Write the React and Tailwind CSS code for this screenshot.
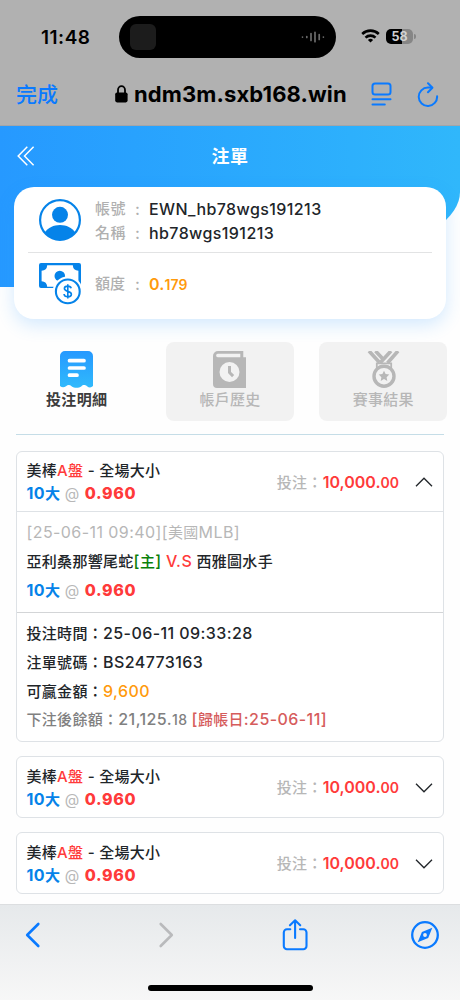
const bets = [
  { id: 1, open: true },
  { id: 2, open: false },
  { id: 3, open: false },
];

export default function App() {
  return (
    <div className="flex h-[1000px] w-[460px] flex-col overflow-hidden bg-[#fefefe] font-['Inter','Noto_Sans_CJK_TC',sans-serif] text-[15px] font-medium tracking-[0.3px] text-[#212529]">
      <BrowserTop />
      <main className="h-[778px] shrink-0 overflow-hidden">
        <header className="h-[161px] rounded-br-[315px_95px] bg-linear-to-r from-[#2699ff] to-[#30b7fb]">
          <div className="grid h-[60px] grid-cols-[60px_1fr_60px] items-center text-white">
            <svg className="ml-[17px]" width="19" height="20" viewBox="0 0 19 20" fill="none" stroke="currentColor" strokeWidth="1.5">
              <path d="M10.3 0.8 1.2 10l9.1 9.2M16.6 0.8 7.5 10l9.1 9.2" />
            </svg>
            <h1 className="pt-[2px] text-center text-[18px] leading-[24px] font-bold tracking-[0.5px]">注單</h1>
          </div>
        </header>
        <AccountCard />
        <Tabs />
        <div className="mx-[16px] mt-[13px] h-px bg-[#c5dde7]" />
        <div className="mx-[16px] mt-[16px] space-y-[14px]">
          {bets.map((bet) => (
            <BetCard key={bet.id} open={bet.open} />
          ))}
        </div>
      </main>
      <BrowserBottom />
    </div>
  );
}

function BrowserTop() {
  return (
    <div className="h-[126px] shrink-0 border-b border-[#a3a5a8] bg-[#b1b1b1] text-black">
      <div className="flex h-[58px] items-end">
        <span className="ml-[41px] w-[78px] pb-[8px] text-[19px] leading-[24px] font-semibold tracking-[0.5px]">11:48</span>
        <div className="flex h-[42px] w-[217px] items-center justify-between rounded-full bg-black pr-[11px] pl-[11px]">
          <div className="size-[26px] rounded-[6px] bg-[#1c1c1c]" />
          <svg width="24" height="12" viewBox="0 0 24 12" stroke="#6b6b6b" strokeWidth="1.7" strokeLinecap="round">
            <path d="M1.5 6v.1M5.8 5.6v.8M10 2.5v7M14 1.3v9.4M18.2 3.6v4.8M22.4 6v.1" />
          </svg>
        </div>
        <svg className="mb-[15px] ml-[25px]" width="19" height="14" viewBox="0 0 19 14" fill="none" stroke="#000" strokeWidth="2.6">
          <path d="M1.2 5a12 12 0 0 1 16.6 0" />
          <path d="M4.5 8.6a7.2 7.2 0 0 1 10 0" />
          <path d="M9.5 13.6 6.9 11a3.8 3.8 0 0 1 5.2 0Z" fill="#000" stroke="none" />
        </svg>
        <div className="mb-[14px] ml-[6px] flex items-center gap-px">
          <div className="flex h-[15px] w-[27px] items-center justify-center rounded-[5px] bg-linear-to-r from-black from-58% to-[#868686] to-58% pt-px text-[12.5px] leading-none font-bold tracking-[0px] text-[#d2d2d2]">
            58
          </div>
          <div className="h-[5px] w-[1.5px] rounded-r-full bg-[#868686]" />
        </div>
      </div>
      <div className="flex h-[67px] items-center pt-[5px]">
        <span className="ml-[16px] w-[99px] pt-[2px] text-[21px] tracking-[0px] text-[#0a7aff]">完成</span>
        <svg width="13" height="18" viewBox="0 0 13 18">
          <path d="M3 8V5a3.5 3.9 0 0 1 7 0v3" fill="none" stroke="#000" strokeWidth="1.8" />
          <rect x="0.2" y="7.4" width="12.4" height="10" rx="1.8" />
        </svg>
        <span className="ml-[6px] w-[237px] text-[22px] leading-[28px] font-bold tracking-[0.12px] whitespace-nowrap">ndm3m.sxb168.win</span>
        <svg width="21" height="24" viewBox="0 0 21 24" fill="none" stroke="#0a7aff" strokeWidth="2" strokeLinecap="round">
          <rect x="1.5" y="1.5" width="18" height="11" rx="2.5" />
          <path d="M1.5 17.3h18M1.5 22.6h12.3" />
        </svg>
        <svg className="ml-[25px]" width="22" height="25" viewBox="0 0 22 25" fill="none" stroke="#0a7aff" strokeWidth="2" strokeLinecap="round" strokeLinejoin="round">
          <path d="M20.1 14.2A9.2 9.2 0 1 1 10.9 5.6h4" />
          <path d="M11 1.3l4.4 4.4L11 10.2" />
        </svg>
      </div>
    </div>
  );
}

function AccountCard() {
  return (
    <section className="relative mx-[14px] -mt-[100px] h-[132px] rounded-[20px] bg-white px-[14px] shadow-[0_6px_18px_rgba(40,150,255,0.2)]">
      <div className="flex h-[66px] items-center border-b border-[#e2e3e4] pt-px pl-[11px]">
        <svg width="42" height="42" viewBox="0 0 42 42" fill="#0583e9">
          <circle cx="21" cy="21" r="19.9" fill="none" stroke="#0583e9" strokeWidth="2.2" />
          <circle cx="21" cy="15.8" r="8" />
          <path d="M5.7 33.4C9.2 28.7 14.5 26 21 26s11.8 2.7 15.3 7.4A20 20 0 0 1 5.7 33.4Z" />
        </svg>
        <div className="ml-[14px] pt-[2px] text-[16px] leading-[24px] tracking-[0.4px]">
          <InfoRow label="帳號">EWN_hb78wgs191213</InfoRow>
          <InfoRow label="名稱">hb78wgs191213</InfoRow>
        </div>
      </div>
      <div className="flex h-[62px] items-center pl-[11px]">
        <svg width="42" height="42" viewBox="0 0 42 42" fill="#0583e9">
          <path fillRule="evenodd" d="M2 0h38a2 2 0 0 1 2 2v23H2a2 2 0 0 1-2-2V2a2 2 0 0 1 2-2Zm6.2 2.2A6 6 0 0 1 2.6 7.8v10.4a6 6 0 0 1 5.6 5.6h25.6a6 6 0 0 1 5.6-5.6V7.8a6 6 0 0 1-5.6-5.6Z" />
          <circle cx="20.8" cy="13" r="5.3" />
          <circle cx="28.8" cy="28.4" r="15" fill="#fff" />
          <circle cx="28.8" cy="28.4" r="11.9" fill="#fff" stroke="#0583e9" strokeWidth="2.1" />
          <path d="M32.2 25.3c-.4-1.6-1.7-2.2-3.4-2.2-2 0-3.4.9-3.4 2.5 0 3.7 7 1.8 7 5.6 0 1.7-1.6 2.6-3.6 2.6s-3.6-.9-3.8-2.8M28.8 21.3v14.3" fill="none" stroke="#0583e9" strokeWidth="1.6" />
        </svg>
        <div className="ml-[14px] text-[16px] leading-[24px] tracking-[0.1px]">
          <InfoRow label="額度">
            <span className="font-semibold text-[#ff9a0c]">
              0.<span className="text-[14px]">179</span>
            </span>
          </InfoRow>
        </div>
      </div>
    </section>
  );
}

function InfoRow({ label, children }) {
  return (
    <div className="flex">
      <span className="w-[32px] text-[15px] text-[#b0b0b0]">{label}</span>
      <span className="w-[22px] pl-[8px] text-[#b0b0b0]">:</span>
      <span>{children}</span>
    </div>
  );
}

function Tabs() {
  return (
    <nav className="mx-[12.5px] mt-[23px] grid grid-cols-3 gap-[25px] text-[15px] leading-[22px] text-[#b7b7b7]">
      <div className="flex h-[79px] flex-col items-center pt-[9px] font-bold text-[#3c3c3c]">
        <svg width="33" height="37" viewBox="0 0 33 37">
          <defs>
            <linearGradient id="receipt" x1="0" y1="0" x2="0" y2="1">
              <stop offset="0" stopColor="#2699ff" />
              <stop offset="1" stopColor="#30bafc" />
            </linearGradient>
          </defs>
          <path d="M5 0h23a5 5 0 0 1 5 5v30c-2 2-4 1.7-6 .2-2.6-2-4.5-1-5.5 0-3 2.2-7 2.2-10 0-1.5-1.4-3.5-1.8-5.5 0-2 1.5-4 1.5-6-.2V5a5 5 0 0 1 5-5Z" fill="url(#receipt)" />
          <path d="M9.5 9.7H24M9.5 17H24M9.5 24.2H17" stroke="#fff" strokeWidth="3.7" strokeLinecap="round" />
        </svg>
        <span className="pt-px">投注明細</span>
      </div>
      <div className="flex h-[79px] flex-col items-center rounded-[8px] bg-[#f2f2f2] pt-[9px]">
        <svg width="33" height="37" viewBox="0 0 33 37" fill="#b7b7b7">
          <path d="M5 0h25.3v6.2H33V37H4a4 4 0 0 1-4-4V5a5 5 0 0 1 5-5Z" />
          <path d="M4.8 2.8h22.5v3.4H4.8a1.7 1.7 0 0 1 0-3.4Z" fill="#f2f2f2" />
          <circle cx="16.5" cy="21" r="10" fill="#f2f2f2" />
          <path d="M16.5 15v6.5l3.6 3.6" fill="none" stroke="#b7b7b7" strokeWidth="3" />
        </svg>
        <span className="pt-px">帳戶歷史</span>
      </div>
      <div className="flex h-[79px] flex-col items-center rounded-[8px] bg-[#f2f2f2] pt-[9px]">
        <svg width="33" height="37" viewBox="0 0 33 37" fill="none" stroke="#b7b7b7">
          <path d="M2 0 12.5 11.5M8.5 0l7 7.5M24 0 13 12M31 0 20.5 12" strokeWidth="3.6" />
          <path d="M9.8 17v-4.6h14.4V17" strokeWidth="1.8" />
          <circle cx="17" cy="25.2" r="10" strokeWidth="3.4" />
          <path d="m17 19.8 1.6 3.3 3.7.5-2.7 2.6.7 3.7-3.3-1.8-3.3 1.8.7-3.7-2.7-2.6 3.7-.5Z" fill="#b7b7b7" stroke="none" />
        </svg>
        <span className="pt-px">賽事結果</span>
      </div>
    </nav>
  );
}

// latin letters and digits run one size above the chinese text
function Num({ children }) {
  return <span className="text-[16px] leading-none tracking-[0.42px]">{children}</span>;
}

function Pick() {
  return (
    <div>
      <span className="font-bold text-[#0583e9]">
        <Num>10</Num>大
      </span>
      <span className="font-normal text-[#b7b7b7]"> @ </span>
      <span className="pl-[0.5px] text-[16px] leading-none font-extrabold tracking-[0.65px] text-[#ff3a3a]">0.960</span>
    </div>
  );
}

function BetCard({ open }) {
  return (
    <article className="rounded-[6px] border border-[#dee2e6] bg-white">
      <div className={`flex items-center justify-between pr-[10.5px] pl-[9.5px] ${open ? 'h-[59px]' : 'h-[60px]'}`}>
        <div className="pt-px leading-[23px]">
          <div>
            美棒<span className="text-[#ff3a3a]">A盤</span> - 全場大小
          </div>
          <Pick />
        </div>
        <div className="flex items-center pt-px">
          <div className={open ? 'pt-px leading-[24px]' : 'leading-[24px]'}>
            <span className="text-[#b7b7b7]">投注：</span>
            <span className="text-[16px] leading-none font-semibold tracking-[0px] text-[#ff3a3a]">
              10,000.<span className="text-[14px]">00</span>
            </span>
          </div>
          <svg className={open ? 'ml-[15.5px]' : 'ml-[15.5px] rotate-180'} width="18" height="10" viewBox="0 0 18 10" fill="none" stroke="#212529" strokeWidth="1.3">
            <path d="M1 9.2 9 1.2l8 8" />
          </svg>
        </div>
      </div>
      {open && <BetDetail />}
    </article>
  );
}

function BetDetail() {
  return (
    <div className="leading-[28.75px]">
      <div className="h-[101px] border-t border-[#dee2e6] px-[9.5px] pt-[7px]">
        <div className="font-normal text-[#b7b7b7]">
          <Num>[25-06-11 09:40][</Num>美國<Num>MLB]</Num>
        </div>
        <div>
          亞利桑那響尾蛇
          <span className="text-[#0a800a]">
            <Num>[</Num>主<Num>]</Num>
          </span>{' '}
          <span className="text-[#ff3a3a]">
            <Num>V.S</Num>
          </span>{' '}
          西雅圖水手
        </div>
        <Pick />
      </div>
      <div className="h-[129px] border-t border-[#d3d5d7] px-[9.5px] pt-[7px]">
        <div>
          投注時間：<Num>25-06-11 09:33:28</Num>
        </div>
        <div>
          注單號碼：<Num>BS24773163</Num>
        </div>
        <div>
          可贏金額：
          <span className="text-[#ff9a0c]">
            <Num>9,600</Num>
          </span>
        </div>
        <div className="text-[#808080]">
          下注後餘額：<Num>21,125.</Num>
          <span className="text-[14px] leading-none">18</span>{' '}
          <span className="text-[#d65c5c]">
            <Num>[</Num>歸帳日<Num>:25-06-11]</Num>
          </span>
        </div>
      </div>
    </div>
  );
}

function BrowserBottom() {
  return (
    <footer className="flex h-[96px] shrink-0 flex-col items-center justify-between border-t border-[#dcdee0] bg-linear-to-b from-[#e6e9eb] to-[#f7f7f7] pb-[9px]">
      <div className="flex h-[60px] w-full items-center text-[#0a7aff]">
        <svg className="ml-[25px]" width="16" height="26" viewBox="0 0 16 26" fill="none" stroke="currentColor" strokeWidth="2.6" strokeLinecap="round" strokeLinejoin="round">
          <path d="M13.3 2 2.2 13l11.1 11" />
        </svg>
        <svg className="ml-[117px]" width="16" height="26" viewBox="0 0 16 26" fill="none" stroke="#b9babc" strokeWidth="2.6" strokeLinecap="round" strokeLinejoin="round">
          <path d="M2.7 2l11.1 11-11.1 11" />
        </svg>
        <svg className="ml-[108px]" width="26" height="32" viewBox="0 0 26 32" fill="none" stroke="currentColor" strokeWidth="2.1" strokeLinecap="round" strokeLinejoin="round">
          <path d="M8.3 10.3H5a3.2 3.2 0 0 0-3.2 3.2v13.6A3.2 3.2 0 0 0 5 30.3h16.3a3.2 3.2 0 0 0 3.2-3.2V13.5a3.2 3.2 0 0 0-3.2-3.2H18" />
          <path d="M13.1 19V1.3M8 6.3l5.1-5 5.1 5" />
        </svg>
        <svg className="ml-[103px]" width="28" height="28" viewBox="0 0 28 28" fill="none" stroke="currentColor">
          <circle cx="14" cy="14" r="12.8" strokeWidth="2.3" />
          <path fillRule="evenodd" d="M21.3 6.7 17.2 16.9 6.7 21.3l4.2-10.2ZM14 12.1a1.9 1.9 0 1 0 0 3.8 1.9 1.9 0 0 0 0-3.8Z" fill="currentColor" stroke="none" />
        </svg>
      </div>
      <div className="h-[6px] w-[165px] rounded-full bg-black" />
    </footer>
  );
}
